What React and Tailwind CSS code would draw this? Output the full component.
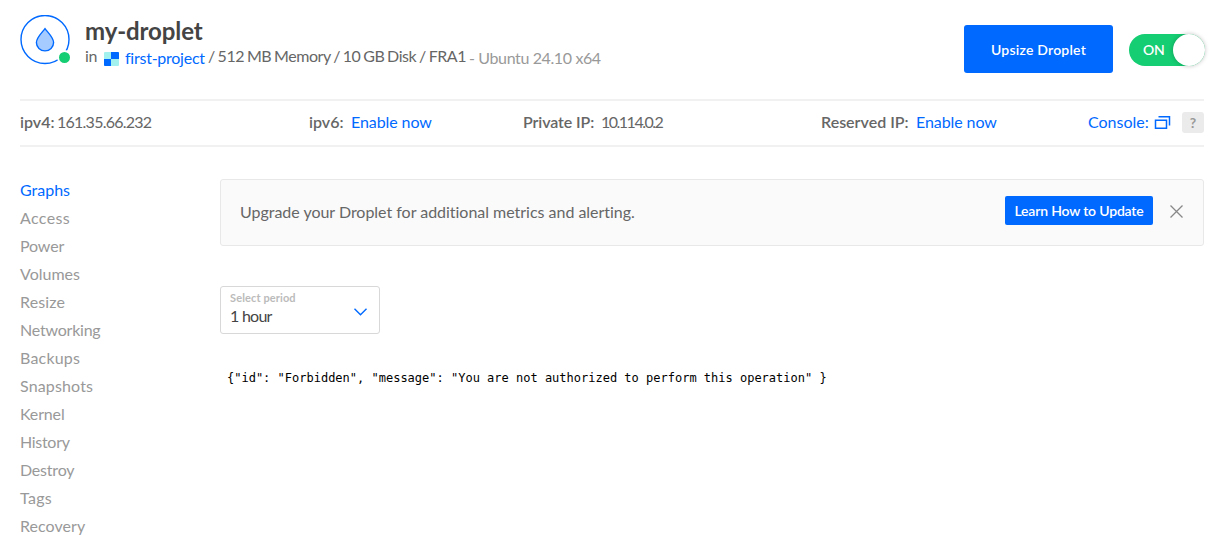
import React from "react";

const NAV = [
  ["Graphs", "text-[#0069ff]"],
  ["Access", "tracking-[0.35px]"],
  ["Power", "tracking-[-0.15px]"],
  ["Volumes", ""],
  ["Resize", "tracking-[0.15px]"],
  ["Networking", "tracking-[-0.22px]"],
  ["Backups", "tracking-[0.2px]"],
  ["Snapshots", "tracking-[0.15px]"],
  ["Kernel", "tracking-[-0.15px]"],
  ["History", "tracking-[-0.3px]"],
  ["Destroy", "tracking-[-0.2px]"],
  ["Tags", "tracking-[0.3px]"],
  ["Recovery", "tracking-[0.05px]"],
];

function DropletIcon() {
  return (
    <div className="relative mt-[15px] size-[50px] shrink-0">
      <svg width="50" height="50" viewBox="0 0 50 50" fill="none" stroke="#0069ff" strokeWidth="1.4">
        <circle cx="25" cy="24.5" r="24" />
        <path
          d="M25 13.6c-2.6 3.6-8.6 8.8-8.6 14a8.6 8.3 0 0 0 17.2 0c0-5.200-6-10.400-8.600-14z"
          fill="#a6ccff"
        />
      </svg>
      <span className="absolute top-[35px] left-[37px] size-[15px] rounded-full border-2 border-white bg-[#15cd72]" />
    </div>
  );
}

function ProjectIcon() {
  return (
    <svg className="mt-[5px] ml-[7px] shrink-0" width="15" height="14" viewBox="0 0 15 14">
      <rect width="15" height="14" rx="1" fill="#a3f1ee" />
      <path d="M7 0h7a1 1 0 0 1 1 1v6H7zM0 7h7v7H1a1 1 0 0 1-1-1z" fill="#0069ff" />
    </svg>
  );
}

function Header() {
  return (
    <header className="flex h-[99px] items-start">
      <DropletIcon />
      <div className="ml-[15px] flex-1 pt-[17px]">
        <h1 className="text-2xl leading-[27px] font-bold tracking-[-0.1px] text-[#444]">my-droplet</h1>
        <div className="flex h-6 items-center leading-6 whitespace-nowrap">
          <span className="w-3 tracking-[-0.3px]">in</span>
          <ProjectIcon />
          <span className="mt-[3px] ml-1.5 w-[83px] tracking-[-0.25px] text-[#0069ff]">first-project</span>
          <span className="w-[261px] tracking-[-0.43px] [word-spacing:-0.9px]">/ 512 MB Memory / 10 GB Disk / FRA1</span>
          <span className="mt-[3px] tracking-[-0.38px] text-[#999]">- Ubuntu 24.10 x64</span>
        </div>
      </div>
      <button className="mt-[25px] h-12 w-[149px] rounded-[3px] bg-[#0069ff] pt-0.5 text-sm font-semibold tracking-[0.22px] text-white">
        Upsize Droplet
      </button>
      <button className="relative mt-[34px] mr-[-1px] ml-4 flex h-8 w-[76px] items-center rounded-full bg-[#15cd72] pl-[14px] text-sm font-semibold tracking-[-0.3px] text-white">
        ON
        <span className="absolute top-0 right-0 size-8 rounded-full bg-white shadow-[0_0_4px_rgba(0,0,0,0.25)]" />
      </button>
    </header>
  );
}

function NetworkBar() {
  return (
    <div className="flex h-12 items-center border-y-2 border-[#f1f1f1] whitespace-nowrap">
      <div className="mb-0.5 flex w-[289px]">
        <span className="w-[37px] font-semibold">ipv4:</span>
        <span className="tracking-[-0.75px]">161.35.66.232</span>
      </div>
      <div className="mb-0.5 flex w-[214px]">
        <span className="w-[42px] font-semibold">ipv6:</span>
        <span className="tracking-[-0.08px] text-[#0069ff]">Enable now</span>
      </div>
      <div className="mb-0.5 flex w-[298px]">
        <span className="w-[78px] font-semibold tracking-[-0.1px]">Private IP:</span>
        <span className="tracking-[-1.5px]">10.114.0.2</span>
      </div>
      <div className="mb-0.5 flex w-[267px]">
        <span className="w-[95px] font-semibold">Reserved IP:</span>
        <span className="tracking-[-0.08px] text-[#0069ff]">Enable now</span>
      </div>
      <span className="mb-0.5 text-[#0069ff]">Console:</span>
      <svg className="mb-0.5 ml-[5px]" width="17" height="15" viewBox="0 0 17 15" fill="none" stroke="#0069ff" strokeWidth="1.5">
        <path d="M1.500 5.250h11v8h-11z" />
        <path d="M4.500 1.750h11v8.750" />
      </svg>
      <span className="mb-px ml-auto flex h-[21px] w-[22px] items-center justify-center rounded-[3px] bg-[#ebebeb] text-sm font-bold text-[#999]">
        ?
      </span>
    </div>
  );
}

export default function App() {
  return (
    <div className="h-[551px] w-full overflow-hidden bg-white pr-[25px] pl-5 font-['Lato',sans-serif] text-base leading-6 text-[#666]">
      <Header />
      <NetworkBar />
      <div className="flex pt-[29px]">
        <nav className="w-[200px] shrink-0 text-[#999]">
          {NAV.map(([label, style]) => (
            <a key={label} className={`block h-7 leading-7 ${style}`}>
              {label}
            </a>
          ))}
        </nav>
        <main className="flex-1 pt-[3px]">
          <div className="flex h-[67px] items-center rounded-[3px] border border-[#e8e8e8] bg-[#fafafa] pr-5 pl-[19px]">
            <p className="mb-0.5 flex-1 tracking-[-0.02px]">Upgrade your Droplet for additional metrics and alerting.</p>
            <button className="mb-1 h-[29px] w-[148px] rounded-[2px] bg-[#0069ff] pt-px text-sm font-semibold tracking-[-0.18px] text-white">
              Learn How to Update
            </button>
            <svg className="mb-0.5 ml-[17px]" width="13" height="13" viewBox="0 0 13 13" stroke="#888" strokeWidth="1.300">
              <path d="M.5.5l12 12M12.500.5l-12 12" />
            </svg>
          </div>
          <div className="mt-10 flex h-12 w-40 items-center rounded-[3px] border border-[#d8d8d8] pr-3 pl-[9px]">
            <div className="mb-0.5 flex-1">
              <div className="text-[11px] leading-[14px] font-bold tracking-[0.12px] text-[#bbb]">Select period</div>
              <div className="leading-[22px] tracking-[-0.75px] text-[#444]">1 hour</div>
            </div>
            <svg className="mt-[3px]" width="13" height="8" viewBox="0 0 13 8" fill="none" stroke="#0069ff" strokeWidth="1.400">
              <path d="M.5.8l6 6 6-6" />
            </svg>
          </div>
          <pre className="mt-9 pl-[7px] font-['DejaVu_Sans_Mono',monospace] text-xs leading-4 text-black">
            {'{"id": "Forbidden", "message": "You are not authorized to perform this operation" }'}
          </pre>
        </main>
      </div>
    </div>
  );
}
